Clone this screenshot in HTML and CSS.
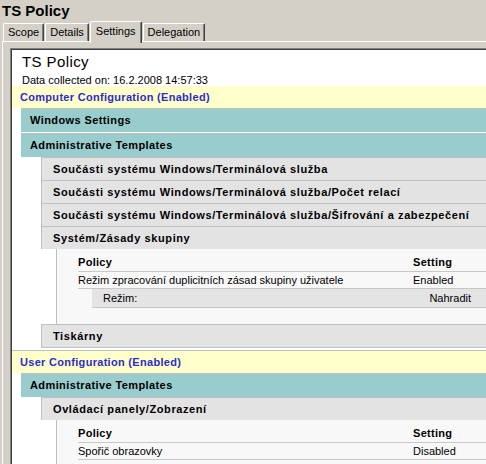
FILE: index.html
```html
<!DOCTYPE html>
<html lang="cs">
<head>
    <meta charset="UTF-8">
    <title>TS Policy</title>
    <link rel="stylesheet" href="styles.css">
</head>
<body>
    <div class="title">TS Policy</div>

    <div class="tabs">
        <span class="tab">Scope</span>
        <span class="tab">Details</span>
        <span class="tab active">Settings</span>
        <span class="tab">Delegation</span>
    </div>

    <div class="panel">
        <div class="report">
            <div class="report-inner">
                <h2>TS Policy</h2>
                <div class="collected">Data collected on: 16.2.2008 14:57:33</div>

                <div class="he0">Computer Configuration (Enabled)</div>
                <div class="group">
                    <div class="he1">Windows Settings</div>
                    <div class="he1">Administrative Templates</div>
                    <div class="subgroup">
                        <div class="he4">Součásti systému Windows/Terminálová služba</div>
                        <div class="he4">Součásti systému Windows/Terminálová služba/Počet relací</div>
                        <div class="he4">Součásti systému Windows/Terminálová služba/Šifrování a zabezpečení</div>
                        <div class="he4">Systém/Zásady skupiny</div>
                        <div class="policies">
                            <div class="prow phead"><span>Policy</span><span>Setting</span></div>
                            <div class="prow"><span>Režim zpracování duplicitních zásad skupiny uživatele</span><span>Enabled</span></div>
                            <div class="subrow"><span>Režim:</span><span>Nahradit</span></div>
                        </div>
                        <div class="he4">Tiskárny</div>
                    </div>
                </div>

                <div class="he0 next">User Configuration (Enabled)</div>
                <div class="group">
                    <div class="he1">Administrative Templates</div>
                    <div class="subgroup">
                        <div class="he4">Ovládací panely/Zobrazení</div>
                        <div class="policies">
                            <div class="prow phead"><span>Policy</span><span>Setting</span></div>
                            <div class="prow"><span>Spořič obrazovky</span><span>Disabled</span></div>
                        </div>
                    </div>
                </div>
            </div>
        </div>
    </div>
</body>
</html>
```

FILE: styles.css
```css
* {
    box-sizing: border-box;
    margin: 0;
    padding: 0;
}
html, body {
    height: 100%;
    overflow: hidden;
}
body {
    background-color: #D4D0C8;
    font-family: "Liberation Sans", Arial, sans-serif;
    font-size: 11px;
    color: #000;
}

.title {
    font-size: 15px;
    font-weight: bold;
    line-height: 21px;
    padding-left: 2px;
}

/* tabs */
.tabs {
    display: flex;
    align-items: flex-end;
    height: 20px;
    padding-left: 3px;
    position: relative;
    z-index: 1;
}
.tab {
    height: 18px;
    line-height: 16px;
    padding: 0 4px;
    margin-left: 1px;
    border: 1px solid #fff;
    border-bottom: none;
    border-right-color: #404040;
    border-radius: 2px 2px 0 0;
    box-shadow: inset -1px 0 #808080;
    background-color: #D4D0C8;
}
.tab:first-child {
    margin-left: 0;
}
.tab.active {
    height: 22px;
    line-height: 18px;
    margin-bottom: -2px;
    padding: 0 5px;
}

.panel {
    margin-left: 2px;
    border-top: 1px solid #fff;
    border-left: 1px solid #fff;
    padding: 6px 0 0 7px;
}
.report {
    border-top: 1px solid #808080;
    border-left: 1px solid #808080;
}
.report-inner {
    border-top: 1px solid #404040;
    border-left: 1px solid #404040;
    background-color: #fff;
    min-height: 500px;
}
.report h2 {
    font-size: 15px;
    font-weight: normal;
    line-height: 24px;
    letter-spacing: .4px;
    padding-left: 10px;
}
.collected {
    line-height: 12px;
    padding-left: 10px;
}

/* section headings */
.he0 {
    background-color: #FFFFCC;
    color: #2D2DC8;
    font-weight: bold;
    letter-spacing: .3px;
    line-height: 22px;
    padding-left: 8px;
}
.he0.next {
    margin-top: 2px;
    border-top: 1px solid #C0C0C0;
}
.group {
    margin-left: 9px;
}
.he1 {
    background-color: #99CCCC;
    font-weight: bold;
    letter-spacing: .4px;
    line-height: 23px;
    padding-left: 9px;
    margin-top: 1px;
    border-top: 1px solid #C0C0C0;
}
.he1:first-child {
    margin-top: 0;
}
.subgroup {
    margin-left: 20px;
    border-bottom: 1px solid #C0C0C0;
}
.he4 {
    background-color: #E3E3E3;
    font-weight: bold;
    letter-spacing: .6px;
    line-height: 22px;
    padding-left: 11px;
    border-top: 1px solid #C0C0C0;
    border-left: 1px solid #C0C0C0;
    white-space: nowrap;
}

/* policy tables */
.policies {
    margin-left: 15px;
    border-left: 1px solid #C0C0C0;
    background-color: #F8F8F8;
    padding: 5px 0 16px 21px;
}
.prow {
    display: grid;
    grid-template-columns: 335px 1fr;
    line-height: 16px;
    border-bottom: 1px solid #C8C8C8;
    white-space: nowrap;
}
.prow.phead {
    line-height: 17px;
    font-weight: bold;
    letter-spacing: .3px;
}
.subrow {
    display: flex;
    justify-content: space-between;
    margin-left: 14px;
    padding: 0 15px 0 11px;
    line-height: 18px;
    background-color: #E4E4E4;
    border-bottom: 1px solid #C8C8C8;
}
```
